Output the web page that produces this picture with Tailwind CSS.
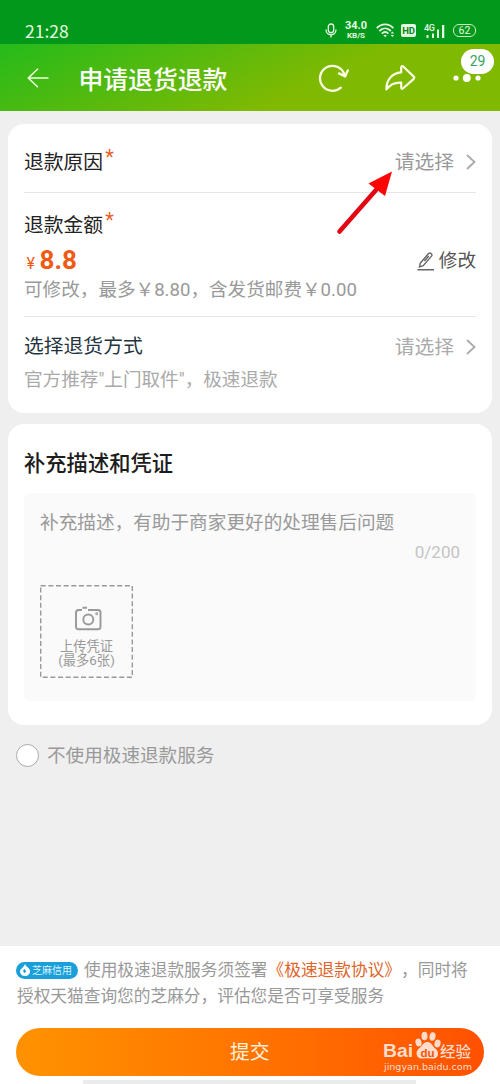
<!DOCTYPE html>
<html lang="zh-CN">
<head>
<meta charset="utf-8">
<title>申请退货退款</title>
<script src="https://cdn.jsdelivr.net/npm/@tailwindcss/browser@4"></script>
</head>
<body class="w-[500px] h-[1084px] overflow-hidden bg-[#efefef] font-['Roboto','Noto_Sans_CJK_SC',sans-serif] whitespace-nowrap">
<div class="relative flex flex-col h-[1084px]">
  <!-- status bar -->
  <div class="h-11 shrink-0 bg-[#02981b] text-[#e4f8e2] flex justify-between pl-[25px] pr-[24px] pt-[18px]">
    <div class="text-[17.500px] leading-[25px] font-['Noto_Sans_CJK_SC',sans-serif]">21:28</div>
    <div class="flex items-center h-[25px]">
      <svg class="w-3 h-[15px]" viewBox="0 0 12 15" fill="none" stroke="currentColor" stroke-width="1.3"><rect x="3.3" y="1" width="5.4" height="8.6" rx="2.7"/><path d="M1 6.5c0 7 10 7 10 0M6 12v2.5"/></svg>
      <div class="ml-[7px] w-[24px] flex flex-col items-center font-bold"><span class="text-[11px] leading-[10px]">34.0</span><span class="text-[8px] leading-[9px]">KB/S</span></div>
      <svg class="ml-[8px] w-[19px] h-[15px]" viewBox="0 0 19 15" fill="none" stroke="currentColor" stroke-width="1.8"><path d="M.8 5.2c4.8-5 11.8-5 16.6 0M3.3 8c3.5-3.5 8.1-3.5 11.600 0M5.800 10.600c2-2 4.600-2 6.600 0"/><path d="M7.400 12.300q1.700-1.300 3.400 0l-1.700 1.900z" fill="currentColor" stroke="none"/><path d="M14.600 10.400l1.800-2 1.800 2zM14.600 12l1.800 2 1.800-2z" fill="currentColor" stroke="none"/></svg>
      <div class="ml-[6px] w-[15px] h-[13px] rounded-[2px] bg-[#e4f8e2] text-[#02861b] text-[9.5px] leading-[13px] font-bold text-center tracking-tight">HD</div>
      <svg class="ml-[8px] w-[21px] h-[16px]" viewBox="0 0 21 16" fill="currentColor"><text x="0" y="8" font-size="9" font-family="Roboto" font-weight="500" textLength="11">4G</text><path d="M2.500 12h2v3h-2zM8 10.500h2v4.500H8zM13 6.500h2V15h-2zM18 2h2.300v13H18z"/></svg>
      <div class="ml-[8px] w-[23px] h-[13px] border-[1.5px] border-[#c9efbe] rounded-[6px] text-[10.500px] leading-[11px] text-center">62</div>
    </div>
  </div>
  <!-- navigation bar -->
  <header class="relative h-[67px] shrink-0 bg-[linear-gradient(155deg,#25bb1b_0%,#80b902_62%,#80b902_100%)] text-white flex items-center pl-[27px]">
    <svg class="w-[22px] h-[20px]" viewBox="0 0 22 20" fill="none" stroke="#f3ffdc" stroke-width="1.500"><path d="M21.500 10H1.500M11 .7L1.300 10l9.700 9.300"/></svg>
    <h1 class="ml-[29.500px] w-[150px] text-[24.800px] leading-[36px] font-medium pt-[6px]">申请退货退款</h1>
    <svg class="ml-[89px] w-[32px] h-[30px]" viewBox="0 0 32 30" fill="none" stroke="#fbffe4" stroke-width="2.300" stroke-linecap="round" stroke-linejoin="round"><path d="M22.800 24.700A12.500 12.500 0 1 1 26.500 11.800"/><path d="M21 10.400l6.200 3 2.600-6"/></svg>
    <svg class="ml-[34px] w-[32px] h-[28px]" viewBox="0 0 32 28" fill="none" stroke="#fbffe4" stroke-width="2.200" stroke-linejoin="round"><path d="M17.200 3.600c0-1.600 1-2 2-1.100l10.300 9.900c1 1 1 1.700 0 2.700l-10.300 9.200c-1 .9-2 .4-2-1v-4.700c-6-.4-11 1.800-14.800 6.800C2.200 16.800 7.400 9 17.200 8.300z"/></svg>
    <svg class="ml-[36px] w-[30px] h-[10px]" viewBox="0 0 30 10" fill="#fff"><circle cx="4" cy="5" r="2.600"/><circle cx="14.800" cy="5" r="3.900"/><circle cx="26" cy="5" r="2.600"/></svg>
    <div class="absolute left-[461px] top-[5px] w-[33px] h-[25px] rounded-full bg-white text-[#35a35b] text-[14px] leading-[25px] text-center">29</div>
  </header>
  <!-- refund details -->
  <section class="relative mx-2 mt-[13px] h-[289px] shrink-0 rounded-[16px] bg-white px-4 text-[#222]">
    <div class="h-[69px] flex items-center justify-between border-b border-[#e5e5e5] pt-[10px]">
      <div class="flex text-[19.800px] leading-[28px]">退款原因<span class="text-[#e8612a] text-[20px] leading-[17px] ml-[2px]">*</span></div>
      <div class="flex items-center text-[#999] text-[19.800px] leading-[28px]">请选择
        <svg class="ml-[12px] w-[10px] h-[16px] mb-[3px]" viewBox="0 0 10 16" fill="none" stroke="#aaa" stroke-width="1.800"><path d="M1 1l7.500 7L1 15"/></svg>
      </div>
    </div>
    <div class="h-[124px] border-b border-[#e5e5e5] pt-[19px]">
      <div class="flex text-[19.800px] leading-[28px]">退款金额<span class="text-[#e8612a] text-[20px] leading-[17px] ml-[2px]">*</span></div>
      <div class="h-[40px] flex items-center justify-between">
        <div class="flex items-baseline text-[#f05a13] font-bold text-[26px] leading-[30px] pt-[4px]"><span class="text-[16px] font-normal w-[15.500px] pl-[2.500px]">¥</span>8.8</div>
        <div class="flex items-center text-[#555] text-[18.600px] leading-[28px] pt-px">
          <svg class="mr-[4px] w-[18px] h-[20px]" viewBox="0 0 18 20" fill="none" stroke="#666" stroke-width="1.400"><path d="M.5 18.800h16.500M3.200 12.200L11.600 2.500c1.500-1.500 4.300.8 2.900 2.600L6.200 14.700l-3.700 1.200zM11.800 5l-4.400 5"/></svg>修改</div>
      </div>
      <div class="text-[#999] text-[18.600px] leading-[20px] flex">可修改，最多<span class="w-[18.600px] text-center">￥</span>8.80，含发货邮费<span class="w-[18.600px] text-center">￥</span>0.00</div>
    </div>
    <div class="h-[57px] flex items-center justify-between text-[19.800px] leading-[28px] text-[#24343c] pt-[2px]">选择退货方式
      <div class="flex items-center text-[#aaa] pt-[2px]">请选择
        <svg class="ml-[12px] w-[10px] h-[16px] mb-[2px]" viewBox="0 0 10 16" fill="none" stroke="#aaa" stroke-width="1.800"><path d="M1 1l7.500 7L1 15"/></svg>
      </div>
    </div>
    <div class="text-[#aaa] text-[18.600px] leading-[24px] -mt-[6px]">官方推荐"上门取件"，极速退款</div>
    <!-- pointer arrow -->
    <svg class="absolute left-[326px] top-[46px] w-[60px] h-[66px]" viewBox="0 0 60 66"><path d="M5.500 61.500L42 20" stroke="#e30613" stroke-width="4.600" stroke-linecap="round"/><path d="M58 1.500L34.500 13.500 51 26z" fill="#fb0505"/></svg>
  </section>
  <!-- description and proof -->
  <section class="mx-2 mt-[11px] h-[301px] shrink-0 rounded-[16px] bg-white px-4 pt-[25px]">
    <h2 class="text-[21.300px] leading-[30px] font-medium text-[#1c1c1c]">补充描述和凭证</h2>
    <div class="mt-[14px] h-[208px] rounded-[6px] bg-[#fafafa] px-4 pt-[17px] text-[#999]">
      <p class="text-[18.650px] leading-[26px]">补充描述，有助于商家更好的处理售后问题</p>
      <p class="text-right text-[17px] leading-[32px] text-[#c4c4c4]">0/200</p>
      <div class="relative mt-[17px] w-[93px] h-[93px] flex flex-col items-center pt-[21px] text-[13.300px] leading-[14px]">
        <svg class="absolute inset-0 w-[93px] h-[93px]" viewBox="0 0 93 93" fill="none" stroke="#999" stroke-width="1.400" stroke-dasharray="5 2.650"><path d="M.7.7h91.600v91.600H.7z"/></svg>
        <svg class="ml-[3px] w-[27px] h-[25px] mb-[9px]" viewBox="0 0 27 25" fill="none" stroke="#999" stroke-width="1.900"><path d="M7 4H3.500Q1 4 1 6.500v14.200q0 2.500 2.500 2.500h19.500q2.500 0 2.500-2.500V6.500Q25.500 4 23 4H13M7.500 1.700h4.500"/><circle cx="13.300" cy="13.500" r="5"/><circle cx="21.700" cy="7.700" r=".5"/></svg>
        <span>上传凭证</span><span>(最多6张)</span>
      </div>
    </div>
  </section>
  <div class="mt-[17px] ml-4 flex items-center h-[26px] text-[#999] text-[18.600px] leading-[26px]">
    <span class="w-[23px] h-[23px] rounded-full bg-white border-[1.500px] border-[#aaa] mr-[8px]"></span><span class="pt-[2px]">不使用极速退款服务</span>
  </div>
  <!-- agreement and submit -->
  <footer class="mt-auto h-[138px] bg-white pt-[10px] relative">
    <div class="flex items-center pl-4 text-[16.700px] leading-[26px] text-[#999]">
      <span class="w-[62px] h-[17px] mr-[6px] rounded-full bg-[#1a9fdb] text-[#d8f2ff] text-[10px] leading-[17px] flex items-center pl-[4px]"><svg class="w-[10px] h-[12px] mr-[2px]" viewBox="0 0 10 12"><path d="M5 0c1 2 1.500 2.500 2.800 3.300C9.300 4.500 10 5.800 10 7.500 10 10 8 12 5 12S0 10 0 7.500C0 5 3.500 4 5 0z" fill="#fff"/><path d="M4 5c1.800.8 2.800 2.300 1 4C3 8.700 2.800 7 4 5z" fill="#1a9fdb"/></svg>芝麻信用</span><span class="pt-[2px] [text-spacing-trim:space-all]">使用极速退款服务须签署<span class="text-[#de6428]">《极速退款协议》</span>，同时将</span>
    </div>
    <div class="pl-[17px] text-[16.700px] leading-[26px] text-[#999]">授权天猫查询您的芝麻分，评估您是否可享受服务</div>
    <button class="block mt-[18px] mx-4 w-[467.500px] h-[48px] rounded-full bg-linear-to-r from-[#ff9200] to-[#ff5000] text-[#fff0dc] text-[19.800px] leading-[50px]">提交</button>
    <div class="mt-[4px] ml-[83px] w-[333px] h-[4px] bg-[#eaeceb]"></div>
    <!-- watermark -->
    <div class="absolute left-[383px] top-[84px] w-[92px] text-[#ffdccb]">
      <svg class="w-[92px] h-[44px]" viewBox="0 0 92 44" fill="currentColor">
        <text x="0" y="27" font-family="Liberation Sans" font-weight="bold" font-size="19" textLength="30" lengthAdjust="spacingAndGlyphs">Bai</text>
        <ellipse cx="35.500" cy="12.500" rx="3" ry="4" transform="rotate(-15 35.500 12.500)"/><ellipse cx="41.500" cy="6" rx="3" ry="4.300"/><ellipse cx="49.500" cy="6.500" rx="3" ry="4.300" transform="rotate(10 49.500 6.500)"/><ellipse cx="54.500" cy="13.500" rx="3" ry="4" transform="rotate(15 54.500 13.500)"/>
        <path d="M44.500 12c3 0 4.500 2.500 6 4.700 2 2 4.500 3.300 4.500 6.800 0 4-3 5.500-6 5-3-.5-6-.5-9 0-4 .5-6.500-2-6.500-5.500 0-3 2.500-4.500 4.500-6.500 2-2.200 3-4.500 6.500-4.500z"/>
        <text x="37.500" y="26.500" fill="#f85208" font-family="Liberation Sans" font-weight="bold" font-size="11.500">du</text>
        <text x="57" y="26.500" font-family="Noto Sans CJK SC" font-weight="500" font-size="15" textLength="31" lengthAdjust="spacingAndGlyphs">经验</text>
        <text x="1" y="40.300" font-family="DejaVu Sans" font-size="9" textLength="88" lengthAdjust="spacingAndGlyphs">jingyan.baidu.com</text>
      </svg>
    </div>
  </footer>
</div>
</body>
</html>
